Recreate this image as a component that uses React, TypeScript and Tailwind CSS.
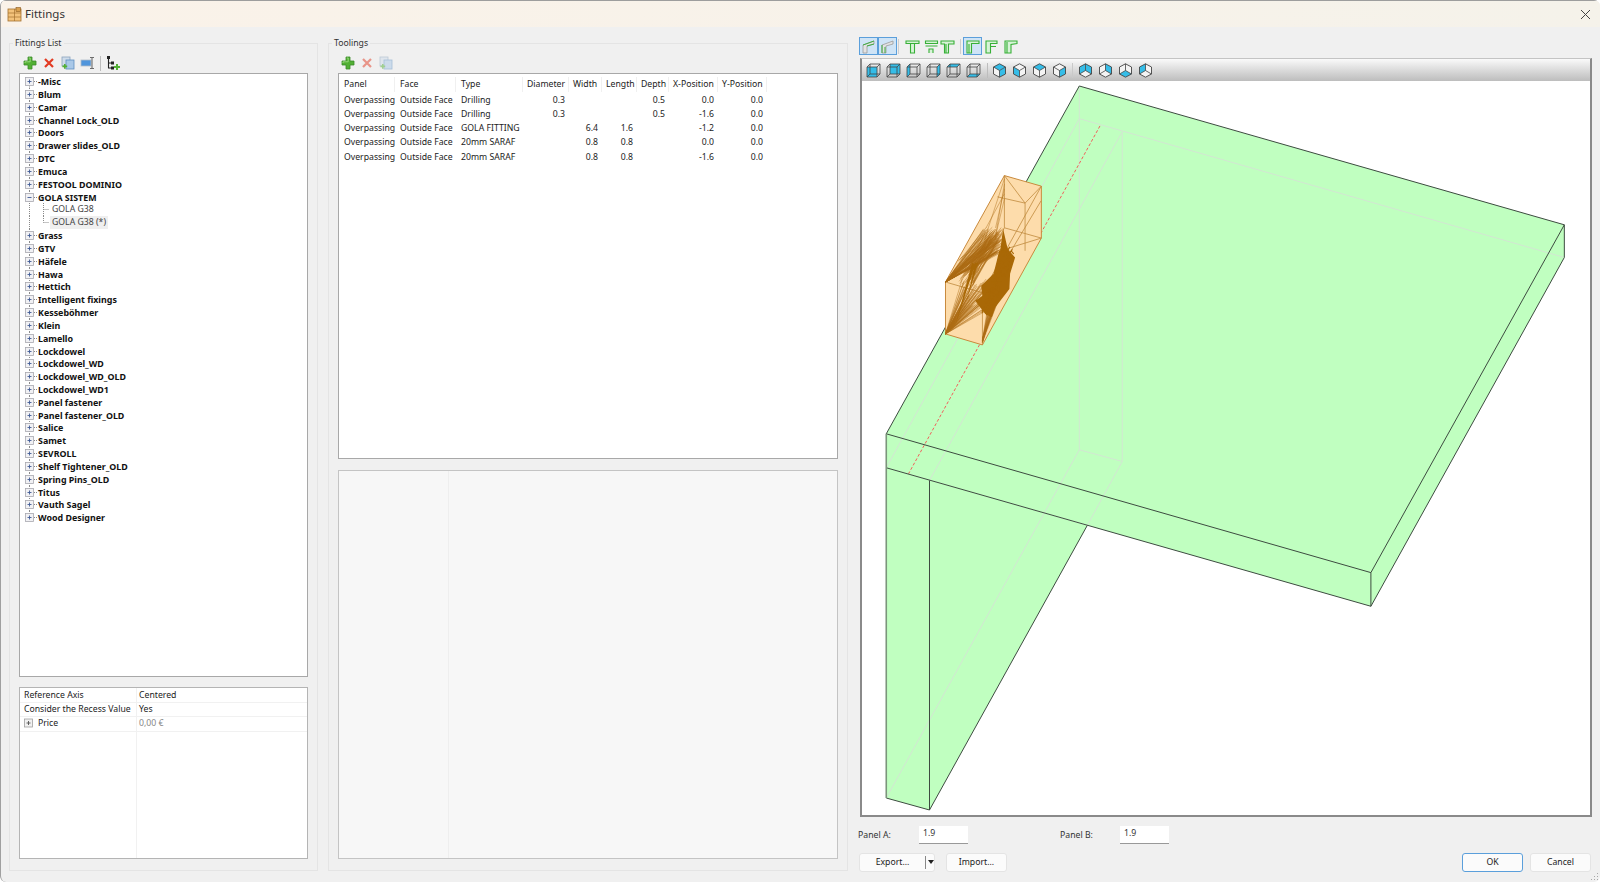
import React from 'react';

const TREE_ITEMS = [
  '-Misc', 'Blum', 'Camar', 'Channel Lock_OLD', 'Doors', 'Drawer slides_OLD', 'DTC', 'Emuca', 'FESTOOL DOMINIO', 'GOLA SISTEM',
  'Grass', 'GTV', 'Häfele', 'Hawa', 'Hettich', 'Intelligent fixings', 'Kesseböhmer', 'Klein', 'Lamello', 'Lockdowel',
  'Lockdowel_WD', 'Lockdowel_WD_OLD', 'Lockdowel_WD1', 'Panel fastener', 'Panel fastener_OLD', 'Salice', 'Samet', 'SEVROLL',
  'Shelf Tightener_OLD', 'Spring Pins_OLD', 'Titus', 'Vauth Sagel', 'Wood Designer',
];

const COLUMNS = [
  { label: 'Panel', w: 'w-[56px]', right: false },
  { label: 'Face', w: 'w-[61px]', right: false },
  { label: 'Type', w: 'w-[67px]', right: false },
  { label: 'Diameter', w: 'w-[46px]', right: true },
  { label: 'Width', w: 'w-[33px]', right: true },
  { label: 'Length', w: 'w-[35px]', right: true },
  { label: 'Depth', w: 'w-[32px]', right: true },
  { label: 'X-Position', w: 'w-[49px]', right: true },
  { label: 'Y-Position', w: 'w-[49px]', right: true },
];

const TOOLINGS = [
  ['Overpassing', 'Outside Face', 'Drilling', '0.3', '', '', '0.5', '0.0', '0.0'],
  ['Overpassing', 'Outside Face', 'Drilling', '0.3', '', '', '0.5', '-1.6', '0.0'],
  ['Overpassing', 'Outside Face', 'GOLA FITTING', '', '6.4', '1.6', '', '-1.2', '0.0'],
  ['Overpassing', 'Outside Face', '20mm SARAF', '', '0.8', '0.8', '', '0.0', '0.0'],
  ['Overpassing', 'Outside Face', '20mm SARAF', '', '0.8', '0.8', '', '-1.6', '0.0'],
];

function PlusIcon() {
  return (
    <svg width="14" height="14" viewBox="0 0 14 14" className="shrink-0">
      <path d="M5 1h4v4h4v4H9v4H5V9H1V5h4z" fill="#52b034" stroke="#3a8a28" strokeWidth="0.8" />
      <path d="M5.8 2h1.4v3.8H2v1.2" fill="none" stroke="#a4e08c" strokeWidth="0.8" />
    </svg>
  );
}

function CrossIcon() {
  return (
    <svg width="14" height="14" viewBox="0 0 14 14" className="shrink-0">
      <path d="M3 3l8 8M11 3l-8 8" stroke="#e23a22" strokeWidth="2.2" />
    </svg>
  );
}

function CopyIcon() {
  return (
    <svg width="14" height="14" viewBox="0 0 14 14" className="shrink-0">
      <rect x="1" y="1" width="8" height="9" fill="#cfdcea" stroke="#8ba3bd" strokeWidth="0.8" />
      <rect x="5" y="4" width="8" height="9" fill="#a9c8e8" stroke="#5f8fc0" strokeWidth="0.8" />
      <path d="M3 8h1.6v1.6h1.6v1.6H4.6v1.6H3v-1.6H1.4V9.6H3z" fill="#52b034" />
    </svg>
  );
}

function RenameIcon() {
  return (
    <svg width="15" height="14" viewBox="0 0 15 14" className="shrink-0">
      <rect x="1" y="4" width="10" height="6" fill="#4f95dc" stroke="#b0bcc8" strokeWidth="0.8" />
      <path d="M10 1.5h4M10 12.5h4M12 1.5v11" stroke="#6d6d6d" strokeWidth="1.1" fill="none" />
    </svg>
  );
}

function HierarchyIcon() {
  return (
    <svg width="15" height="16" viewBox="0 0 15 16" className="shrink-0">
      <path d="M2.5 3v10h5M2.5 8h5" stroke="#222" strokeWidth="1.1" fill="none" />
      <rect x="1" y="1" width="3" height="3" fill="#222" />
      <rect x="5" y="6.5" width="3" height="3" fill="#222" />
      <rect x="5" y="11.5" width="3" height="3" fill="#222" />
      <path d="M10 9h2v2h2v2h-2v2h-2v-2H8v-2h2z" fill="#52b034" />
    </svg>
  );
}

function Expander({ open, first, last }: { open: boolean; first?: boolean; last?: boolean }) {
  return (
    <svg width="13" height="13" viewBox="0 0 13 13" className="shrink-0 overflow-visible">
      <path d={`M4.5 ${first ? 6.5 : 0}V${last ? 6.5 : 13}M9 6.5h4`} stroke="#8a8a8a" strokeWidth="1" strokeDasharray="1 1" fill="none" />
      <rect x="0.5" y="2.5" width="8" height="8" fill="#f1f1f4" stroke="#a8a8b0" strokeWidth="0.8" />
      <path d={open ? 'M2.5 6.5h4' : 'M2.5 6.5h4M4.5 4.5v4'} stroke="#3f5a94" strokeWidth="0.9" />
    </svg>
  );
}

function ChildRow({ label, last, selected }: { label: string; last?: boolean; selected?: boolean }) {
  return (
    <div className="flex h-[12.83px] items-center">
      <svg width="25" height="13" viewBox="0 0 25 13" className="shrink-0 overflow-visible">
        <path d="M4.5 0V13" stroke="#8a8a8a" strokeWidth="1" strokeDasharray="1 1" fill="none" />
        <path d={`M18.5 0V${last ? 6.5 : 13}M18.5 6.5h6`} stroke="#8a8a8a" strokeWidth="1" strokeDasharray="1 1" fill="none" />
      </svg>
      <span className={`h-[13px] px-[2px] leading-[13px] text-[#444] ${selected ? 'bg-[#efefef]' : ''}`}>{label}</span>
    </div>
  );
}

function Tree() {
  return (
    <div className="h-[604px] border border-[#a8a8a8] bg-white pl-[5px] pt-[1.2px]">
      {TREE_ITEMS.map((label, i) => (
        <React.Fragment key={label}>
          <div className="flex h-[12.83px] items-center">
            <Expander open={label === 'GOLA SISTEM'} first={i === 0} last={i === TREE_ITEMS.length - 1} />
            <span className="text-[8.9px] font-bold leading-[13px] text-[#111]">{label}</span>
          </div>
          {label === 'GOLA SISTEM' && (
            <>
              <ChildRow label="GOLA G38" />
              <ChildRow label="GOLA G38 (*)" last selected />
            </>
          )}
        </React.Fragment>
      ))}
    </div>
  );
}

function PropRow({ left, right, indent, muted }: { left: string; right: string; indent?: boolean; muted?: boolean }) {
  return (
    <div className="flex h-[14.2px] items-center border-b border-[#f1f1f1]">
      <div className="flex h-full w-[115.5px] shrink-0 items-center pl-[4px] text-[#222]">
        {indent && (
          <svg width="14" height="13" viewBox="0 0 14 13" className="shrink-0">
            <rect x="0.5" y="2" width="8" height="8" fill="#f1f1f1" stroke="#a0a0a0" strokeWidth="0.8" />
            <path d="M2.5 6h4M4.5 4v4" stroke="#555" strokeWidth="0.9" />
          </svg>
        )}
        {left}
      </div>
      <div className={`pl-[3.5px] ${muted ? 'text-[#888]' : 'text-[#222]'}`}>{right}</div>
    </div>
  );
}

function PropGrid() {
  return (
    <div className="relative mt-[10px] h-[172px] border border-[#b4b4b4] bg-white pt-px">
      <div className="absolute bottom-0 left-[115.5px] top-0 w-px bg-[#f1f1f1]" />
      <PropRow left="Reference Axis" right="Centered" />
      <PropRow left="Consider the Recess Value" right="Yes" />
      <PropRow left="Price" right="0,00 €" indent muted />
    </div>
  );
}

function ToolingsTable() {
  return (
    <div className="h-[386px] border border-[#a8a8a8] bg-white pt-[3px]">
      <div className="flex h-[15px] items-center">
        {COLUMNS.map((c) => (
          <div key={c.label} className={`${c.w} h-full shrink-0 whitespace-nowrap border-r border-[#f0f0f0] px-[4px] leading-[15px] text-[#222] ${c.right ? 'text-right' : 'text-left pl-[5px]'}`}>
            {c.label}
          </div>
        ))}
      </div>
      <div className="pt-[0.5px]">
        {TOOLINGS.map((row, r) => (
          <div key={r} className="flex h-[14.25px] items-center">
            {row.map((cell, c) => (
              <div key={c} className={`${COLUMNS[c].w} shrink-0 whitespace-nowrap px-[4px] leading-[14px] text-[#222] ${COLUMNS[c].right ? 'text-right' : 'text-left pl-[5px]'}`}>
                {cell}
              </div>
            ))}
          </div>
        ))}
      </div>
    </div>
  );
}

function CornerIcon({ mirrored }: { mirrored?: boolean }) {
  return (
    <svg width="15" height="15" viewBox="0 0 15 15">
      {mirrored ? (
        <>
          <path d="M2 14V6l11-4v3L6 7v7z" fill="#e3e3e3" stroke="#9a9a9a" strokeWidth="0.8" />
          <path d="M2 14V6M5 14V8" stroke="#3fae3f" strokeWidth="1" />
        </>
      ) : (
        <>
          <path d="M2 14V6l11-4v3L6 7v7z" fill="#e3e3e3" stroke="#9a9a9a" strokeWidth="0.8" />
          <path d="M2 6l11-4M6 7l7-2" stroke="#3fae3f" strokeWidth="1" />
        </>
      )}
    </svg>
  );
}

function TeeIcon({ kind }: { kind: 'tee' | 'gap' | 'flange' | 'gamma' | 'gamma2' | 'gamma3' }) {
  const stroke = '#37b037';
  return (
    <svg width="15" height="15" viewBox="0 0 15 15" fill="none" stroke={stroke} strokeWidth="1.1" className="shrink-0">
      {kind === 'tee' && <path d="M1 2h13v2.5H1zM5.5 4.5V14h4V4.5" fill="#d7f3d7" />}
      {kind === 'gap' && <path d="M1.5 2h12v2.5h-12zM1.5 7h12M5 14V10h4V14" fill="#d7f3d7" />}
      {kind === 'flange' && <path d="M1 2h13v3H8.5v9H4.5V5H1zM6 5v9" fill="#d7f3d7" />}
      {kind === 'gamma' && <path d="M2 2h12v2.5H6.5V14H2zM4 5v9" fill="#d7f3d7" />}
      {kind === 'gamma2' && <path d="M2 2h11v2.5H6.5V14H2zM6.5 7.5H12" fill="#d7f3d7" />}
      {kind === 'gamma3' && <path d="M2 14V2h12v2.5L8 5.5V14zM4 14V3" fill="#d7f3d7" />}
    </svg>
  );
}

function ViewButton({ active, children }: { active?: boolean; children: React.ReactNode }) {
  return (
    <div className={`flex h-[18px] w-[19px] shrink-0 items-center justify-center ${active ? 'border border-[#5b9fdb] bg-[#cfe4f6]' : ''}`}>
      {children}
    </div>
  );
}

function ViewToolbar() {
  return (
    <div className="flex h-[18px] items-center">
      <ViewButton active><CornerIcon /></ViewButton>
      <ViewButton active><CornerIcon mirrored /></ViewButton>
      <div className="ml-px h-[15px] w-px bg-[#cfcfcf]" />
      <div className="ml-[6px] flex">
        <TeeIcon kind="tee" />
        <div className="ml-[4px]"><TeeIcon kind="gap" /></div>
        <div className="ml-px"><TeeIcon kind="flange" /></div>
      </div>
      <div className="ml-[5px] h-[15px] w-px bg-[#cfcfcf]" />
      <div className="ml-[2px]"><ViewButton active><TeeIcon kind="gamma" /></ViewButton></div>
      <div className="ml-[2px] flex gap-[4px]">
        <TeeIcon kind="gamma2" />
        <TeeIcon kind="gamma3" />
      </div>
    </div>
  );
}

// box glyph, one face of it blue
function BoxIcon({ face }: { face: number }) {
  const faces = [
    'M1 4h10v10H1z',
    'M4 1h10v10H4z',
    'M1 4l3-3v10l-3 3z',
    'M11 4l3-3v10l-3 3z',
    'M1 4l3-3h10l-3 3z',
    'M1 14l3-3h10l-3 3z',
  ];
  return (
    <svg width="15" height="15" viewBox="0 0 15 15" className="shrink-0">
      <path d={faces[face]} fill="#35bde8" />
      <path d="M1 4h10v10H1zM4 1h10v10H4zM1 4l3-3M11 4l3-3M11 14l3-3M1 14l3-3" fill="none" stroke="#444" strokeWidth="0.8" />
    </svg>
  );
}

// hex glyph, sectors filled blue
function HexIcon({ fills, from }: { fills: number[]; from: 'top' | 'bottom' }) {
  const c = 7.5;
  const pts = [[7.5, 0.8], [13.5, 4], [13.5, 11], [7.5, 14.2], [1.5, 11], [1.5, 4]];
  const spokes = from === 'top' ? [1, 3, 5] : [0, 2, 4];
  const sectors = spokes.map((s) => {
    const a = pts[s];
    const b = pts[(s + 1) % 6];
    const d = pts[(s + 2) % 6];
    return `M${c} ${c}L${a[0]} ${a[1]}L${b[0]} ${b[1]}L${d[0]} ${d[1]}z`;
  });
  return (
    <svg width="15" height="15" viewBox="0 0 15 15" className="shrink-0">
      <path d="M7.5 0.8L13.5 4V11L7.5 14.2L1.5 11V4z" fill="#f4f4f4" />
      {fills.map((f) => <path key={f} d={sectors[f]} fill="#35bde8" />)}
      <path d="M7.5 0.8L13.5 4V11L7.5 14.2L1.5 11V4z" fill="none" stroke="#444" strokeWidth="0.9" />
      {spokes.map((s) => <path key={s} d={`M${c} ${c}L${pts[s][0]} ${pts[s][1]}`} stroke="#444" strokeWidth="0.8" />)}
    </svg>
  );
}

function CadToolbar() {
  return (
    <div className="flex h-[22px] shrink-0 items-center bg-gradient-to-b from-[#fafafa] to-[#bdbdbd] pl-[4px]">
      <div className="flex gap-[5px]">
        {[0, 1, 2, 3, 4, 5].map((f) => <BoxIcon key={f} face={f} />)}
      </div>
      <div className="ml-[6px] mr-[4px] h-[15px] w-px bg-[#bdbdbd]" />
      <div className="flex gap-[5px]">
        <HexIcon from="top" fills={[0, 2]} />
        <HexIcon from="top" fills={[1]} />
        <HexIcon from="top" fills={[2]} />
        <HexIcon from="top" fills={[0]} />
      </div>
      <div className="ml-[5px] mr-[5px] h-[15px] w-px bg-[#c9c9c9]" />
      <div className="flex gap-[5px]">
        <HexIcon from="bottom" fills={[2, 0]} />
        <HexIcon from="bottom" fills={[0]} />
        <HexIcon from="bottom" fills={[1]} />
        <HexIcon from="bottom" fills={[2]} />
      </div>
    </div>
  );
}

function makeRnd(start: number) {
  let seed = start;
  return () => {
    seed = (seed * 16807) % 2147483647;
    return seed / 2147483647;
  };
}

function fanLines() {
  const out: string[] = [];
  const rnd = makeRnd(7);
  for (let i = 0; i < 70; i++) {
    out.push(`M945.3 281.3L${982 + rnd() * 20} ${228 + rnd() * 26}`);
    out.push(`M945.3 333.3L${962 + rnd() * 30} ${278 + rnd() * 30}`);
    out.push(`M${958 + rnd() * 16} ${256 + rnd() * 32}L${985 + rnd() * 18} ${226 + rnd() * 22}`);
  }
  for (let i = 0; i < 24; i++) {
    out.push(`M982.3 ${342 - rnd() * 4}L${992 + rnd() * 14} ${268 + rnd() * 22}`);
  }
  for (let i = 0; i < 5; i++) {
    out.push(`M1004.3 ${178 + i * 5}L${984 + rnd() * 12} ${226 + rnd() * 16}`);
  }
  return out.join('');
}

// rough strokes round the dense core so its edge isn't a clean polygon
function scribble() {
  const out: string[] = [];
  const rnd = makeRnd(91);
  for (let i = 0; i < 60; i++) {
    const t = rnd();
    const cx = 1008 - t * 22;
    const cy = 250 + t * 62;
    out.push(`M${cx - 6 + rnd() * 12} ${cy - 6 + rnd() * 12}L${cx - 6 + rnd() * 12} ${cy - 6 + rnd() * 12}`);
  }
  return out.join('');
}

function Scene() {
  const dark = '#3c4a3f';
  const faint = '#d2e6d2';
  return (
    <svg viewBox="861.7 80 729 735" className="min-h-0 w-full flex-1 bg-white" preserveAspectRatio="none">
      <path d="M1079.3 85L1565 224V256.7L1371.3 606L886 467.3V433.3z" fill="#c0ffc0" />
      <path d="M886 467.3L1087.3 525L929.3 810L886 798z" fill="#c0ffc0" />

      <g stroke={faint} strokeWidth="1" fill="none">
        <path d="M1079.3 117.7L1565 256.7M1079.3 85V449.3L1122.3 461V130.7M886 467.3L1079.3 117.7M929.3 480L1122.3 130.7M886 798L1079.3 449.3M1087.3 525L1122.3 461" />
      </g>

      <path d="M1100 125L908.3 473.3" stroke="#f0605a" strokeWidth="1" strokeDasharray="3 2" fill="none" />

      <g stroke={dark} strokeWidth="1" fill="none">
        <path d="M886 433.3L1079.3 85L1565 224L1371.3 572.3L886 433.3" />
        <path d="M886 467.3L1371.3 606L1565 256.7V224M1371.3 572.3V606" />
        <path d="M929.3 480V810L886 798M929.3 810L1087.3 525" />
      </g>
      <path d="M886 433.3V798" stroke="#7b957b" strokeWidth="1.6" fill="none" />

      <path d="M1004.3 174.7L1041.3 185.3V237.3L982.3 344.3L945.3 333.3V281.3z" fill="#fddcab" stroke="#c98a3c" strokeWidth="1" />
      <path d="M1004.3 174.7V227L1041.3 237.3M945.3 281.3L982.3 292V344.3M982.3 292L1041.3 185.3M997.3 196L1025 202.3V250M1004.3 227L945.3 333.3M1004.3 174.7L1025 202.3L1041.3 185.3M1041.3 237.3L1000 250M1041 200L1005 260" stroke="#c08a3e" strokeWidth="0.8" fill="none" />
      <path d={fanLines()} stroke="#ad6c14" strokeWidth="0.45" fill="none" />
      <path d="M999 250L1006.7 247.3L1015 256.7L1010 273L1009.3 288.3L995 306.7L991.7 316.7L985 313.3L981 285L993.3 273.3L996.7 260z" fill="#a96806" />
      <path d="M1003 228L1008 250L1000 250zM966.7 300L975 262L978 262zM955 325L972 262L975 264zM985 313L975 300L990 290z" fill="#a96806" />
      <path d={scribble()} stroke="#a96806" strokeWidth="1.1" fill="none" />
    </svg>
  );
}

function PushButton({ label, w, primary }: { label: string; w: string; primary?: boolean }) {
  return (
    <div className={`${w} flex h-[19px] items-center justify-center rounded-[3px] border bg-[#fbfbfb] text-[#222] ${primary ? 'border-[#5b9fdb]' : 'border-[#e4e4e4]'}`}>
      {label}
    </div>
  );
}

function Group({ title, className, children }: { title: string; className: string; children: React.ReactNode }) {
  return (
    <fieldset className={`${className} h-[834px] shrink-0 border border-[#e4e4e4]`}>
      <legend className="-ml-[6px] h-[12px] px-[2px] leading-[12px] text-[#333]">{title}</legend>
      {children}
    </fieldset>
  );
}

export default function App() {
  return (
    <div className="relative flex h-[882px] w-[1600px] flex-col overflow-hidden rounded-[6px] border-l border-[#a0a0a0] bg-[#f0f0f0] font-['Noto_Sans',sans-serif] text-[8.7px]">
      {/* Title bar */}
      <header className="flex h-[27px] shrink-0 items-center border-t border-[#9d9d9d] bg-gradient-to-r from-[#faf2e9] to-[#f5f2ea] pl-[6px] pr-[9px]">
        <svg width="15" height="15" viewBox="0 0 15 15" className="shrink-0">
          <rect x="1" y="2" width="13" height="12" fill="#f3c27a" stroke="#a3702e" strokeWidth="0.8" />
          <path d="M7.5 2v12M1 6h13M1 10h13" stroke="#a3702e" strokeWidth="0.7" />
          <rect x="9" y="0.5" width="4.5" height="4" fill="#d9a04e" stroke="#8a5a20" strokeWidth="0.6" />
        </svg>
        <span className="ml-[3px] text-[11.5px] text-[#333]">Fittings</span>
        <svg width="11" height="11" viewBox="0 0 11 11" className="ml-auto">
          <path d="M1 1l9 9M10 1l-9 9" stroke="#444" strokeWidth="1" />
        </svg>
      </header>

      <main className="flex gap-[10px] pl-[8px] pr-[9px] pt-[10px]">
        {/* Fittings list */}
        <Group title="Fittings List" className="w-[309px] px-[9px]">
          <div className="flex h-[24px] items-center gap-[5px] pl-[4px] pt-[4px]">
            <PlusIcon />
            <CrossIcon />
            <CopyIcon />
            <RenameIcon />
            <div className="h-[15px] w-px bg-[#bdbdbd]" />
            <HierarchyIcon />
          </div>
          <Tree />
          <PropGrid />
        </Group>

        {/* Toolings */}
        <Group title="Toolings" className="w-[520px] px-[9px]">
          <div className="flex h-[24px] items-center gap-[5px] pl-[3px] pt-[4px]">
            <PlusIcon />
            <div className="opacity-50"><CrossIcon /></div>
            <div className="opacity-50"><CopyIcon /></div>
          </div>
          <ToolingsTable />
          <div className="mt-[11px] flex h-[389px] border border-[#c4c4c4] bg-[#f7f7f7]">
            <div className="w-[110px] border-r border-[#eeeeee]" />
          </div>
        </Group>

        {/* 3D preview */}
        <section className="ml-px flex h-[834px] w-[732px] shrink-0 flex-col">
          <ViewToolbar />
          <div className="-mr-px ml-px mt-[3px] flex h-[760px] flex-col border-b-[2px] border-l-[2px] border-r-[2px] border-t-[1px] border-b-[#8a8a8a] border-l-[#8a8a8a] border-r-[#8a8a8a] border-t-[#c4c4c4]">
            <CadToolbar />
            <Scene />
          </div>
          <div className="mt-[9px] flex h-[18px] items-start text-[#333]">
            <span className="mt-[3px] w-[60px] -translate-x-px">Panel A:</span>
            <div className="h-[18px] w-[49px] border-b border-[#999] bg-white pl-[4px] leading-[14px]">1.9</div>
            <span className="ml-[92px] mt-[3px] w-[60px]">Panel B:</span>
            <div className="h-[18px] w-[49px] border-b border-[#999] bg-white pl-[4px] leading-[14px]">1.9</div>
          </div>
          <div className="mt-[9px] flex items-center">
            <div className="relative flex h-[19px] w-[76px] items-center rounded-[3px] border border-[#e4e4e4] bg-[#fbfbfb] text-[#222]">
              <span className="w-[66px] text-center">Export...</span>
              <div className="h-[13px] w-px bg-[#888]" />
              <div className="ml-[2px] h-0 w-0 border-x-[3.5px] border-t-[4px] border-x-transparent border-t-[#222]" />
            </div>
            <div className="ml-[11px]">
              <PushButton label="Import..." w="w-[61px]" />
            </div>
            <div className="ml-auto flex gap-[7px]">
              <PushButton label="OK" w="w-[61px]" primary />
              <PushButton label="Cancel" w="w-[61px]" />
            </div>
          </div>
        </section>
      </main>

      {/* Size grip */}
      <svg width="8" height="8" viewBox="0 0 8 8" className="absolute bottom-[1px] right-[1px]">
        <path d="M6 0h1v1H6zM3 3h1v1H3zM6 3h1v1H6zM0 6h1v1H0zM3 6h1v1H3zM6 6h1v1H6z" fill="#a8a8a8" />
      </svg>
    </div>
  );
}
